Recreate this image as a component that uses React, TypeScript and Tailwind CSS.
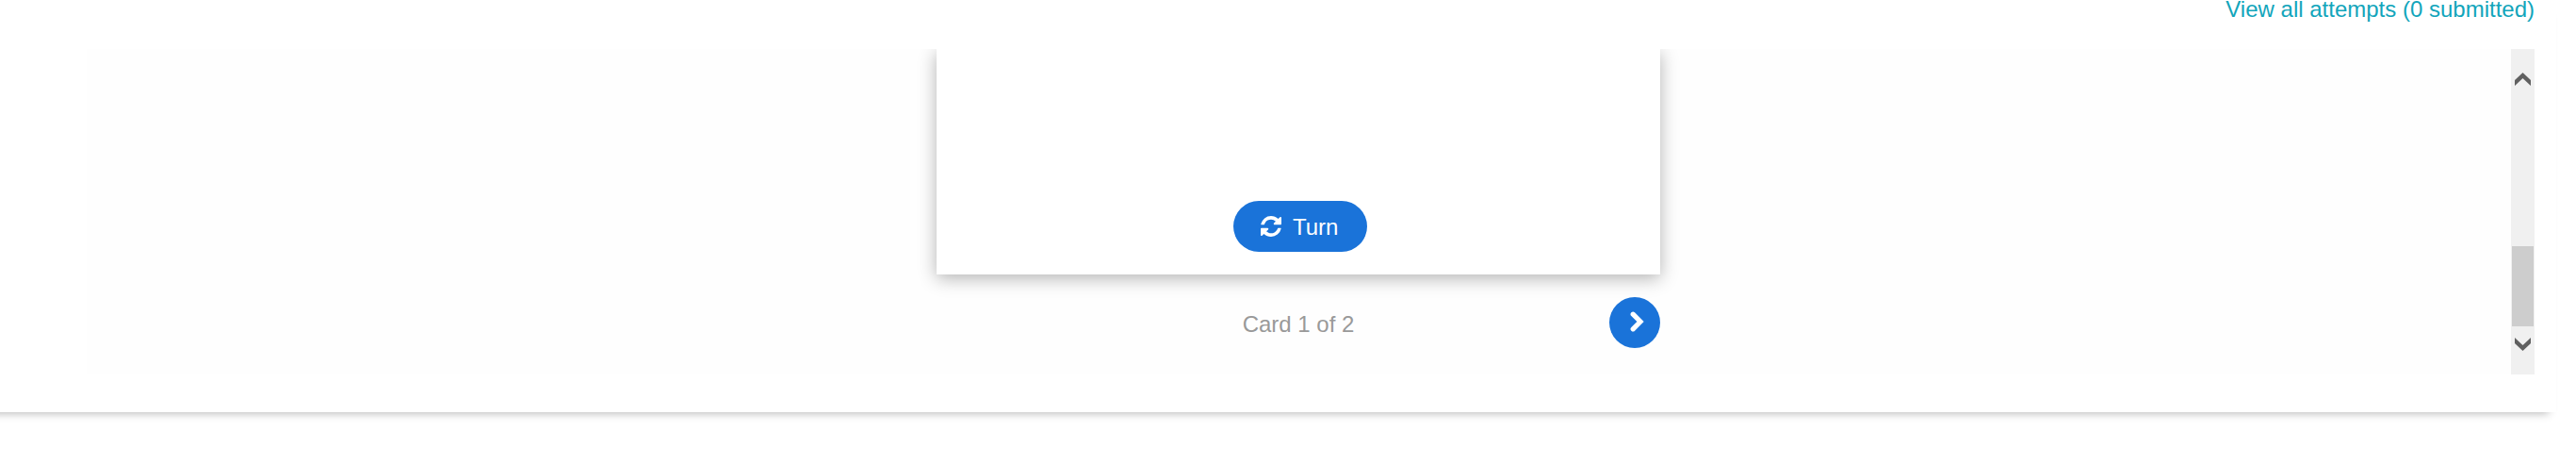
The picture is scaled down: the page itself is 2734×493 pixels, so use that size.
const REFRESH =
  'M1511 928q0 5-1 7-64 268-268 434.5t-478 166.5q-146 0-282.5-55t-243.5-157l-129 129q-19 19-45 19t-45-19-19-45v-448q0-26 19-45t45-19h448q26 0 45 19t19 45-19 45l-137 137q71 66 161 102t187 36q134 0 250-65t186-179q11-17 53-117 8-23 30-23h192q13 0 22.5 9.5t9.5 22.5zm25-800v448q0 26-19 45t-45 19h-448q-26 0-45-19t-19-45 19-45l138-138q-148-137-349-137-134 0-250 65t-186 179q-11 17-53 117-8 23-30 23h-199q-13 0-22.5-9.5t-9.5-22.5v-7q65-268 270-434.5t480-166.5q146 0 284 55.5t245 156.5l130-129q19-19 45-19t45 19 19 45z'

function ScrollBar() {
  return (
    <div className="w-[25px] shrink-0 flex flex-col items-center bg-[#f0f0f0]">
      <svg className="mt-[25px] w-[17px] h-[14px]" viewBox="0 0 17 14" fill="#606060">
        <path d="M8.5 0 17 8V14L8.5 6 0 14V8z" />
      </svg>
      <div className="mt-[170px] w-[23px] h-[85px] bg-[#cdcdcd]" />
      <svg className="mt-3 w-[17px] h-[14px]" viewBox="0 0 17 14" fill="#606060">
        <path d="M8.5 14 17 6V0L8.5 8 0 0v6z" />
      </svg>
    </div>
  )
}

function Flashcards() {
  return (
    <div className="flex-1 overflow-hidden bg-[#fefefe]">
      <div className="w-[768px] ml-[902px]">
        {/* Card, scrolled so that only its bottom part shows */}
        <div className="h-[239px] flex flex-col justify-end items-center pb-6 bg-white shadow-[0_4px_18px_rgba(0,0,0,0.3)]">
          <button className="w-[142px] h-[54px] ml-[4px] pl-[29px] flex items-center rounded-full bg-[#1a73d9] text-white">
            <svg className="w-[22px] h-[22px]" viewBox="0 0 1536 1536" fill="currentColor">
              <path d={REFRESH} />
            </svg>
            <span className="ml-3 pt-[2px]">Turn</span>
          </button>
        </div>

        {/* Progress and navigation */}
        <div className="mt-6 h-[54px] grid grid-cols-[54px_1fr_54px] items-center">
          <span />
          <span className="text-center text-[#999999] pt-[3px]">Card 1 of 2</span>
          <button className="size-[54px] flex items-center justify-center rounded-full bg-[#1a73d9]" aria-label="Next">
            <svg className="w-[15px] h-[22px] ml-[4px] mb-[2px]" viewBox="0 0 15 22" fill="none" stroke="#fff" strokeWidth="5.2">
              <path d="M3.2 3.2 11 11 3.2 18.8" strokeLinecap="round" />
            </svg>
          </button>
        </div>
      </div>
    </div>
  )
}

export default function App() {
  return (
    <div className="h-[493px] overflow-hidden bg-white text-[24px] leading-7 font-['Liberation_Sans',Arial,sans-serif]">
      <div className="w-[2745px] h-[437px] -ml-8 pl-[124px] pr-[23px] bg-white shadow-[0_9px_9px_-8px_rgba(0,0,0,0.3)]">
        <div className="h-[52px] flex justify-end">
          <a href="#" className="h-5 leading-5 text-[#12a5bb]">View all attempts (0 submitted)</a>
        </div>
        <div className="h-[345px] flex">
          <Flashcards />
          <ScrollBar />
        </div>
      </div>
    </div>
  )
}
